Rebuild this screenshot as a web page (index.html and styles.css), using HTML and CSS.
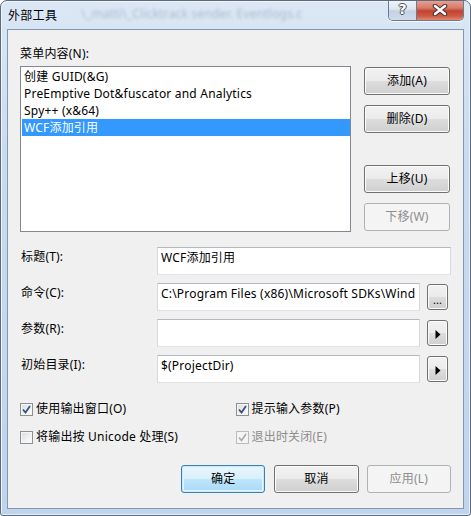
FILE: index.html
```html
<!DOCTYPE html>
<html lang="zh-CN">
<head>
<meta charset="utf-8">
<title>外部工具</title>
<link rel="stylesheet" href="styles.css">
</head>
<body>
<div class="window">
  <div class="titlebar">
    <span class="title">外部工具</span>
    <span class="ghost">\_matti\_Clicktrack sender. Eventlogs.c</span>
    <div class="caption">
      <div class="cap-help">?</div>
      <div class="cap-close">
        <svg width="18" height="12" viewBox="0 0 18 12">
          <path d="M4 2 L14 10 M14 2 L4 10" stroke="#4b3633" stroke-width="4.6" stroke-linecap="round" fill="none"/>
          <path d="M4 2 L14 10 M14 2 L4 10" stroke="#ffffff" stroke-width="2.4" stroke-linecap="round" fill="none"/>
        </svg>
      </div>
    </div>
  </div>
  <div class="client">
    <div class="list-label">菜单内容(N):</div>
    <div class="list-row">
      <div class="listbox">
        <div class="item">创建 GUID(&amp;G)</div>
        <div class="item">PreEmptive Dot&amp;fuscator and Analytics</div>
        <div class="item">Spy++ (x&amp;64)</div>
        <div class="item selected">WCF添加引用</div>
      </div>
      <div class="side-buttons">
        <button class="btn btn-add">添加(A)</button>
        <button class="btn btn-del">删除(D)</button>
        <button class="btn btn-up">上移(U)</button>
        <button class="btn btn-down disabled">下移(W)</button>
      </div>
    </div>
    <div class="fields">
      <div class="field">
        <span class="flabel">标题(T):</span>
        <div class="input input-wide">WCF添加引用</div>
      </div>
      <div class="field">
        <span class="flabel">命令(C):</span>
        <div class="input input-narrow">C:\Program Files (x86)\Microsoft SDKs\Wind</div>
        <button class="btn btn-small"><span class="dots">...</span></button>
      </div>
      <div class="field">
        <span class="flabel">参数(R):</span>
        <div class="input input-narrow"></div>
        <button class="btn btn-small">
          <svg width="6" height="9" viewBox="0 0 6 9"><path d="M0.5 0 L5.5 4.5 L0.5 9 Z" fill="#000"/></svg>
        </button>
      </div>
      <div class="field">
        <span class="flabel">初始目录(I):</span>
        <div class="input input-narrow">$(ProjectDir)</div>
        <button class="btn btn-small">
          <svg width="6" height="9" viewBox="0 0 6 9"><path d="M0.5 0 L5.5 4.5 L0.5 9 Z" fill="#000"/></svg>
        </button>
      </div>
    </div>
    <div class="checks">
      <div class="check-row">
        <label class="check">
          <span class="box"><svg width="9" height="9" viewBox="0 0 9 9"><path d="M1 4.5 L3.5 7.5 L8 1" stroke="#3b4f82" stroke-width="1.8" fill="none"/></svg></span>
          <span class="ctext">使用输出窗口(O)</span>
        </label>
        <label class="check">
          <span class="box"><svg width="9" height="9" viewBox="0 0 9 9"><path d="M1 4.5 L3.5 7.5 L8 1" stroke="#3b4f82" stroke-width="1.8" fill="none"/></svg></span>
          <span class="ctext">提示输入参数(P)</span>
        </label>
      </div>
      <div class="check-row">
        <label class="check">
          <span class="box"></span>
          <span class="ctext">将输出按 Unicode 处理(S)</span>
        </label>
        <label class="check check-disabled">
          <span class="box"><svg width="9" height="9" viewBox="0 0 9 9"><path d="M1 4.5 L3.5 7.5 L8 1" stroke="#a9a9a9" stroke-width="1.6" fill="none"/></svg></span>
          <span class="ctext">退出时关闭(E)</span>
        </label>
      </div>
    </div>
    <div class="footer">
      <button class="btn btn-ok">确定</button>
      <button class="btn btn-cancel">取消</button>
      <button class="btn btn-apply disabled">应用(L)</button>
    </div>
  </div>
</div>
</body>
</html>
```

FILE: styles.css
```css
html, body {
  margin: 0;
  padding: 0;
  background: #ffffff;
}

body {
  font-family: "Noto Sans", "Noto Sans CJK SC", sans-serif;
  font-size: 12px;
  letter-spacing: 0.2px;
  color: #000;
}

.window {
  box-sizing: border-box;
  width: 471px;
  height: 516px;
  border: 1px solid #5d6b7c;
  border-radius: 7px 7px 3px 3px;
  padding: 0 6px 6px 6px;
  background: linear-gradient(to bottom, #dbe7f5 0%, #c9dbf0 30%, #bfd4ed 100%);
  box-shadow: inset 1px 1px 0 #eef4fb, inset -1px -1px 0 #e4edf8;
  overflow: hidden;
}

.titlebar {
  height: 28px;
  display: flex;
  align-items: flex-start;
}

.title {
  margin-left: 1px;
  margin-top: 6px;
  line-height: 16px;
  font-size: 12px;
  letter-spacing: 0.3px;
  font-family: "Noto Sans CJK SC", sans-serif;
  color: #000;
  white-space: nowrap;
}

.ghost {
  margin-left: 24px;
  margin-top: 5px;
  line-height: 16px;
  font-size: 12px;
  color: #7a8898;
  filter: blur(1.4px);
  opacity: 0.45;
  white-space: nowrap;
}

.caption {
  margin-left: auto;
  margin-top: -1px;
  display: flex;
  height: 20px;
  border: 1px solid #6c7a8c;
  border-top: none;
  border-radius: 0 0 5px 5px;
  overflow: hidden;
  box-shadow: 0 1px 0 rgba(255, 255, 255, 0.7);
}

.cap-help {
  box-sizing: border-box;
  width: 28px;
  height: 20px;
  border-right: 1px solid #6c7a8c;
  background: linear-gradient(to bottom, #f1f5fa 0%, #dde7f2 45%, #c3d2e3 55%, #cfdceb 100%);
  color: #fff;
  font-family: "DejaVu Sans", sans-serif;
  font-weight: bold;
  font-size: 14px;
  line-height: 19px;
  text-align: center;
  letter-spacing: 0;
  text-shadow: 1px 0 #4a4f57, -1px 0 #4a4f57, 0 1px #4a4f57, 0 -1px #4a4f57;
}

.cap-close {
  width: 46px;
  height: 20px;
  display: flex;
  align-items: center;
  justify-content: center;
  background: linear-gradient(to bottom, #e8a596 0%, #d67a68 40%, #c3432d 55%, #cc5a44 80%, #e0896f 100%);
}

.cap-close svg {
  display: block;
}

.client {
  box-sizing: border-box;
  height: 480px;
  border: 1px solid #8497b0;
  background: #f0f0f0;
  padding: 0 12px;
}

.list-label {
  margin-top: 16px;
  line-height: 16px;
  height: 16px;
  margin-bottom: 4px;
}

.list-row {
  display: flex;
  height: 166px;
}

.listbox {
  box-sizing: border-box;
  width: 331px;
  height: 166px;
  border: 1px solid #828790;
  background: #fff;
  padding: 1px 0 0 1px;
}

.item {
  height: 17px;
  line-height: 17px;
  padding-left: 2px;
  white-space: nowrap;
}

.item.selected {
  background: #3399ff;
  color: #fff;
}

.side-buttons {
  margin-left: 13px;
  display: flex;
  flex-direction: column;
}

.btn {
  box-sizing: border-box;
  width: 86px;
  height: 28px;
  padding: 0;
  border: 1px solid #707070;
  border-radius: 3px;
  background: linear-gradient(to bottom, #f2f2f2 0%, #ebebeb 48%, #dddddd 52%, #cfcfcf 100%);
  box-shadow: inset 0 0 0 1px #fcfcfc;
  font-family: "Noto Sans", "Noto Sans CJK SC", sans-serif;
  font-size: 12px;
  letter-spacing: 0.2px;
  color: #000;
  line-height: 16px;
  display: flex;
  align-items: center;
  justify-content: center;
}

.btn-add { margin-top: 1px; }
.btn-del { margin-top: 10px; }
.btn-up { margin-top: 32px; }
.btn-down { margin-top: 10px; }

.btn.disabled {
  border-color: #adb2b5;
  background: #f4f4f4;
  box-shadow: none;
  color: #8d8d8d;
}

.btn-ok {
  border-color: #3c7fb1;
  background: linear-gradient(to bottom, #eaf6fd 0%, #d9f0fc 48%, #bee6fd 52%, #a7d9f5 100%);
  box-shadow: inset 0 0 0 1px #c7e9fb, inset 0 0 0 2px #e6f5fd;
}

.fields {
  margin-top: 15px;
  display: flex;
  flex-direction: column;
  gap: 8px;
}

.field {
  display: flex;
  align-items: flex-start;
  height: 28px;
}

.flabel {
  width: 137px;
  flex: none;
  margin-top: 2px;
  line-height: 16px;
  padding-left: 1px;
  box-sizing: border-box;
  white-space: nowrap;
}

.input {
  box-sizing: border-box;
  height: 28px;
  border: 1px solid;
  border-color: #b3b7be #d6d9de #dfe2e6 #d6d9de;
  background: #fff;
  padding: 2px 3px;
  line-height: 16px;
  white-space: nowrap;
  overflow: hidden;
}

.input-wide { width: 294px; }
.input-narrow { width: 263px; }

.btn-small {
  width: 21px;
  height: 26px;
  margin-left: 7px;
  margin-top: 1px;
  padding-top: 2px;
  letter-spacing: 0;
}

.btn-small svg {
  display: block;
  margin-left: 1px;
}

.dots {
  line-height: 12px;
  margin-top: 4px;
  font-size: 11px;
}

.checks {
  margin-top: 18px;
  display: flex;
  flex-direction: column;
  gap: 12px;
}

.check-row {
  display: flex;
  height: 16px;
}

.check {
  display: flex;
  align-items: center;
  width: 216px;
  height: 16px;
  line-height: 16px;
  white-space: nowrap;
}

.box {
  box-sizing: border-box;
  width: 13px;
  height: 13px;
  border: 1px solid #8e8f8f;
  background: linear-gradient(135deg, #d9dce0 0%, #eef0f2 55%, #ffffff 100%);
  box-shadow: inset 0 0 0 1px #f6f6f6;
  display: flex;
  align-items: center;
  justify-content: center;
  flex: none;
}

.box svg {
  display: block;
}

.ctext {
  margin-left: 3px;
}

.check-disabled .box {
  border-color: #bcbcbc;
  background: #f4f4f4;
  box-shadow: none;
}

.check-disabled .ctext {
  color: #8d8d8d;
}

.footer {
  margin-top: 20px;
  display: flex;
  padding-left: 161px;
}

.btn-cancel { margin-left: 9px; }
.btn-apply { margin-left: 8px; }
```
